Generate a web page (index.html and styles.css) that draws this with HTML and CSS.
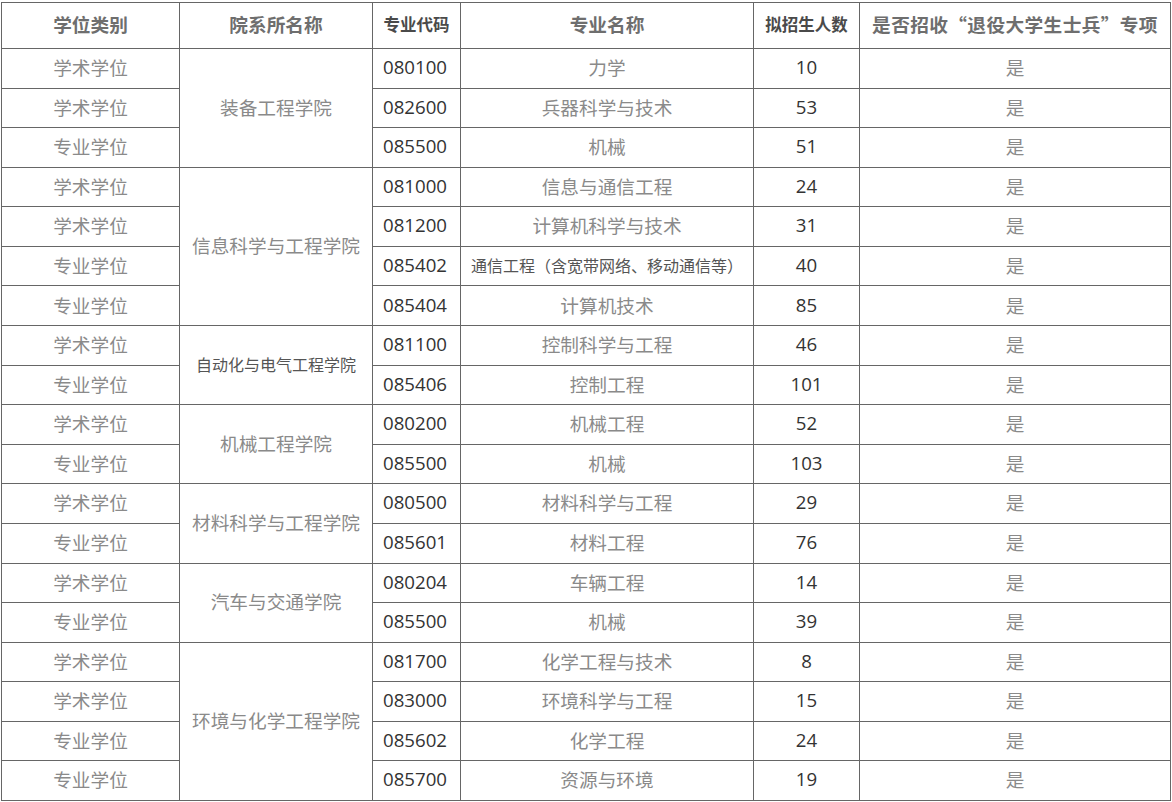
FILE: index.html
```html
<!DOCTYPE html>
<html lang="zh-CN">
<head>
<meta charset="utf-8">
<title>招生计划</title>
<link rel="stylesheet" href="styles.css">
</head>
<body>
<div class="wrap">
<table class="plan">
<colgroup>
<col class="c1"><col class="c2"><col class="c3"><col class="c4"><col class="c5"><col class="c6">
</colgroup>
<thead>
<tr>
<th class="hs">学位类别</th>
<th class="hs">院系所名称</th>
<th class="hn">专业代码</th>
<th class="hs">专业名称</th>
<th class="hn">拟招生人数</th>
<th class="hs hw">是否招收“退役大学生士兵”专项</th>
</tr>
</thead>
<tbody>
<tr><td class="t">学术学位</td><td class="t" rowspan="3">装备工程学院</td><td class="code">080100</td><td class="t">力学</td><td class="num">10</td><td class="t">是</td></tr>
<tr><td class="t">学术学位</td><td class="code">082600</td><td class="t">兵器科学与技术</td><td class="num">53</td><td class="t">是</td></tr>
<tr><td class="t">专业学位</td><td class="code">085500</td><td class="t">机械</td><td class="num">51</td><td class="t">是</td></tr>

<tr><td class="t">学术学位</td><td class="t" rowspan="4">信息科学与工程学院</td><td class="code">081000</td><td class="t">信息与通信工程</td><td class="num">24</td><td class="t">是</td></tr>
<tr><td class="t">学术学位</td><td class="code">081200</td><td class="t">计算机科学与技术</td><td class="num">31</td><td class="t">是</td></tr>
<tr><td class="t">专业学位</td><td class="code">085402</td><td class="s">通信工程（含宽带网络、移动通信等）</td><td class="num">40</td><td class="t">是</td></tr>
<tr><td class="t">专业学位</td><td class="code">085404</td><td class="t">计算机技术</td><td class="num">85</td><td class="t">是</td></tr>

<tr><td class="t">学术学位</td><td class="s" rowspan="2">自动化与电气工程学院</td><td class="code">081100</td><td class="t">控制科学与工程</td><td class="num">46</td><td class="t">是</td></tr>
<tr><td class="t">专业学位</td><td class="code">085406</td><td class="t">控制工程</td><td class="num">101</td><td class="t">是</td></tr>

<tr><td class="t">学术学位</td><td class="t" rowspan="2">机械工程学院</td><td class="code">080200</td><td class="t">机械工程</td><td class="num">52</td><td class="t">是</td></tr>
<tr><td class="t">专业学位</td><td class="code">085500</td><td class="t">机械</td><td class="num">103</td><td class="t">是</td></tr>

<tr><td class="t">学术学位</td><td class="t" rowspan="2">材料科学与工程学院</td><td class="code">080500</td><td class="t">材料科学与工程</td><td class="num">29</td><td class="t">是</td></tr>
<tr><td class="t">专业学位</td><td class="code">085601</td><td class="t">材料工程</td><td class="num">76</td><td class="t">是</td></tr>

<tr><td class="t">学术学位</td><td class="t" rowspan="2">汽车与交通学院</td><td class="code">080204</td><td class="t">车辆工程</td><td class="num">14</td><td class="t">是</td></tr>
<tr><td class="t">专业学位</td><td class="code">085500</td><td class="t">机械</td><td class="num">39</td><td class="t">是</td></tr>

<tr><td class="t">学术学位</td><td class="t" rowspan="4">环境与化学工程学院</td><td class="code">081700</td><td class="t">化学工程与技术</td><td class="num">8</td><td class="t">是</td></tr>
<tr><td class="t">学术学位</td><td class="code">083000</td><td class="t">环境科学与工程</td><td class="num">15</td><td class="t">是</td></tr>
<tr><td class="t">专业学位</td><td class="code">085602</td><td class="t">化学工程</td><td class="num">24</td><td class="t">是</td></tr>
<tr><td class="t">专业学位</td><td class="code">085700</td><td class="t">资源与环境</td><td class="num">19</td><td class="t">是</td></tr>
</tbody>
</table>
</div>
</body>
</html>
```
FILE: styles.css
```css
html, body {
  margin: 0;
  padding: 0;
  background: #fff;
}
.wrap {
  padding: 2px 0 0 1px;
}
.plan {
  border-collapse: collapse;
  table-layout: fixed;
  width: 1169px;
  font-family: "Noto Sans CJK SC", "Noto Sans", sans-serif;
}
.c1 { width: 178px; }
.c2 { width: 193px; }
.c3 { width: 88px; }
.c4 { width: 293px; }
.c5 { width: 106px; }
.c6 { width: 311px; }
.plan th, .plan td {
  border: 1px solid #666;
  padding: 0 0 2px 0;
  text-align: center;
  vertical-align: middle;
  white-space: nowrap;
  overflow: hidden;
}
.plan thead th {
  height: 43px;
}
.plan tbody td {
  height: 36.58px;
}
.hs {
  font-size: 18.67px;
  font-weight: 700;
  color: #6e6e6e;
  line-height: 1.2;
}
.hw {
  letter-spacing: 0.4px;
}
.hn {
  font-size: 16.5px;
  font-weight: 700;
  color: #4a4a4a;
  line-height: 1.2;
}
.t {
  font-size: 18.67px;
  font-weight: 400;
  color: #8a8a8a;
  line-height: 1.2;
}
.s {
  font-size: 16px;
  font-weight: 400;
  color: #555;
  line-height: 1.2;
}
.plan td.code {
  text-align: left;
  padding-left: 10px;
}
.code, .num {
  font-family: "Open Sans", "Noto Sans", sans-serif;
  font-size: 18.67px;
  color: #333;
  line-height: 1.2;
}
```
